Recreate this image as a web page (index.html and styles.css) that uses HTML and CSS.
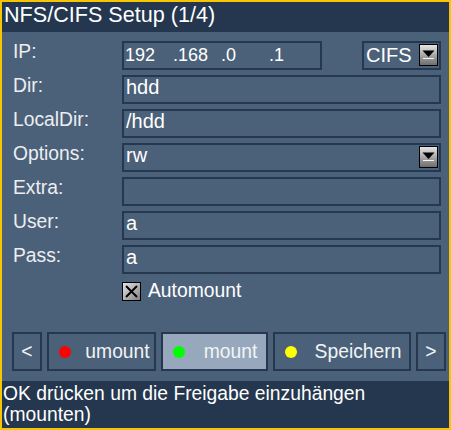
FILE: index.html
```html
<!DOCTYPE html>
<html lang="de">
<head>
  <meta charset="UTF-8">
  <title>NFS/CIFS Setup</title>
  <link rel="stylesheet" href="styles.css">
</head>
<body>
  <div class="frame">
    <div class="title">NFS/CIFS Setup (1/4)</div>

    <div class="content">
      <div class="form">
        <div class="label">IP:</div>
        <div class="ip-row">
          <div class="field ip-field">
            <span class="octet">192</span><span class="octet">.168</span><span class="octet">.0</span><span class="octet">.1</span>
          </div>
          <div class="field select type-select">
            <span>CIFS</span>
            <svg class="arrow" width="19" height="22" viewBox="0 0 19 22">
              <defs>
                <linearGradient id="g1" x1="0" y1="0" x2="0" y2="1">
                  <stop offset="0" stop-color="#e8e8e8"/>
                  <stop offset="1" stop-color="#6a6a6a"/>
                </linearGradient>
              </defs>
              <rect x="0.5" y="0.5" width="18" height="21" fill="url(#g1)" stroke="#000"/>
              <path d="M3.5 6.5 H15.5 L9.5 13 Z" fill="#000"/>
              <path d="M4 14.5 H15" stroke="#f4f4f4" stroke-width="1"/>
            </svg>
          </div>
        </div>

        <div class="label">Dir:</div>
        <div class="field">hdd</div>

        <div class="label">LocalDir:</div>
        <div class="field">/hdd</div>

        <div class="label">Options:</div>
        <div class="field select">
          <span>rw</span>
          <svg class="arrow" width="19" height="22" viewBox="0 0 19 22">
            <defs>
              <linearGradient id="g2" x1="0" y1="0" x2="0" y2="1">
                <stop offset="0" stop-color="#e8e8e8"/>
                <stop offset="1" stop-color="#6a6a6a"/>
              </linearGradient>
            </defs>
            <rect x="0.5" y="0.5" width="18" height="21" fill="url(#g2)" stroke="#000"/>
            <path d="M3.5 6.5 H15.5 L9.5 13 Z" fill="#000"/>
            <path d="M4 14.5 H15" stroke="#f4f4f4" stroke-width="1"/>
          </svg>
        </div>

        <div class="label">Extra:</div>
        <div class="field"></div>

        <div class="label">User:</div>
        <div class="field">a</div>

        <div class="label">Pass:</div>
        <div class="field">a</div>

        <div></div>
        <div class="check-row">
          <svg class="checkbox" width="19" height="19" viewBox="0 0 19 19">
            <defs>
              <linearGradient id="g3" x1="0" y1="0" x2="1" y2="1">
                <stop offset="0" stop-color="#e6e6e6"/>
                <stop offset="1" stop-color="#808080"/>
              </linearGradient>
            </defs>
            <rect x="0.5" y="0.5" width="18" height="18" fill="url(#g3)" stroke="#000"/>
            <path d="M4 4 L15 15 M15 4 L4 15" stroke="#000" stroke-width="2"/>
          </svg>
          <span>Automount</span>
        </div>
      </div>

      <div class="buttons">
        <div class="btn btn-nav">&lt;</div>
        <div class="btn btn-umount"><i class="dot red"></i><span>umount</span></div>
        <div class="btn btn-mount active"><i class="dot green"></i><span>mount</span></div>
        <div class="btn btn-save"><i class="dot yellow"></i><span>Speichern</span></div>
        <div class="btn btn-nav">&gt;</div>
      </div>
    </div>

    <div class="hint">OK drücken um die Freigabe einzuhängen (mounten)</div>
  </div>
</body>
</html>
```

FILE: styles.css
```css
body {
  margin: 0;
  padding: 0;
  font-family: 'Liberation Sans', Arial, sans-serif;
  background: #4b6179;
  color: #fff;
}

.frame {
  width: 451px;
  height: 430px;
  box-sizing: border-box;
  border: 2px solid #f7c600;
  background: #4b6179;
  display: flex;
  flex-direction: column;
}

.title {
  height: 30px;
  box-sizing: border-box;
  background: #24374f;
  font-size: 21.6px;
  line-height: 26px;
  padding-left: 2px;
}

.content {
  flex: 1;
  display: flex;
  flex-direction: column;
  justify-content: space-between;
  padding: 9px 8px 10px 10px;
}

.form {
  display: grid;
  grid-template-columns: 110px 1fr;
  grid-auto-rows: 29px;
  row-gap: 5px;
}

.label {
  padding-left: 1px;
  font-size: 19.3px;
  line-height: 22px;
  color: #eceef2;
}

.field {
  height: 29px;
  box-sizing: border-box;
  border: 2px solid #25384f;
  padding: 0 2px;
  font-size: 20px;
  line-height: 21px;
  white-space: nowrap;
}

.ip-row {
  display: flex;
  justify-content: space-between;
}

.ip-field {
  width: 200px;
  font-size: 18px;
  padding-top: 2px;
  padding-left: 1px;
}

.octet {
  display: inline-block;
  width: 48px;
}

.select {
  display: flex;
  justify-content: space-between;
  padding-right: 1px;
}

.select .arrow {
  margin-top: 1px;
}

.type-select {
  width: 79px;
}

.type-select span {
  padding-top: 2px;
}

.check-row {
  display: flex;
  align-items: center;
  height: 22px;
  margin-top: 1px;
  font-size: 19.3px;
}

.checkbox {
  margin-right: 7px;
}

.buttons {
  display: flex;
  gap: 5px;
}

.btn {
  flex-shrink: 0;
  height: 39px;
  box-sizing: border-box;
  border: 2px solid #25384f;
  display: flex;
  align-items: center;
  font-size: 19.3px;
  color: #f2f4f6;
}

.btn-nav {
  width: 30px;
  justify-content: center;
}

.btn-umount { width: 109px; padding-left: 10px; }
.btn-mount { width: 107px; padding-left: 10px; }
.btn-save { width: 138px; padding-left: 10px; }

.btn span {
  flex: 1;
  text-align: center;
}

.btn.active {
  background: #97a8bd;
}

.dot {
  width: 12px;
  height: 12px;
  border-radius: 50%;
  margin-right: 10px;
  margin-top: 1px;
}

.red { background: #ff0000; }
.green { background: #00ff00; }
.yellow { background: #ffff00; }

.hint {
  height: 47px;
  box-sizing: border-box;
  background: #24374f;
  font-size: 19.3px;
  line-height: 21px;
  padding: 2px 0 0 1px;
}
```
